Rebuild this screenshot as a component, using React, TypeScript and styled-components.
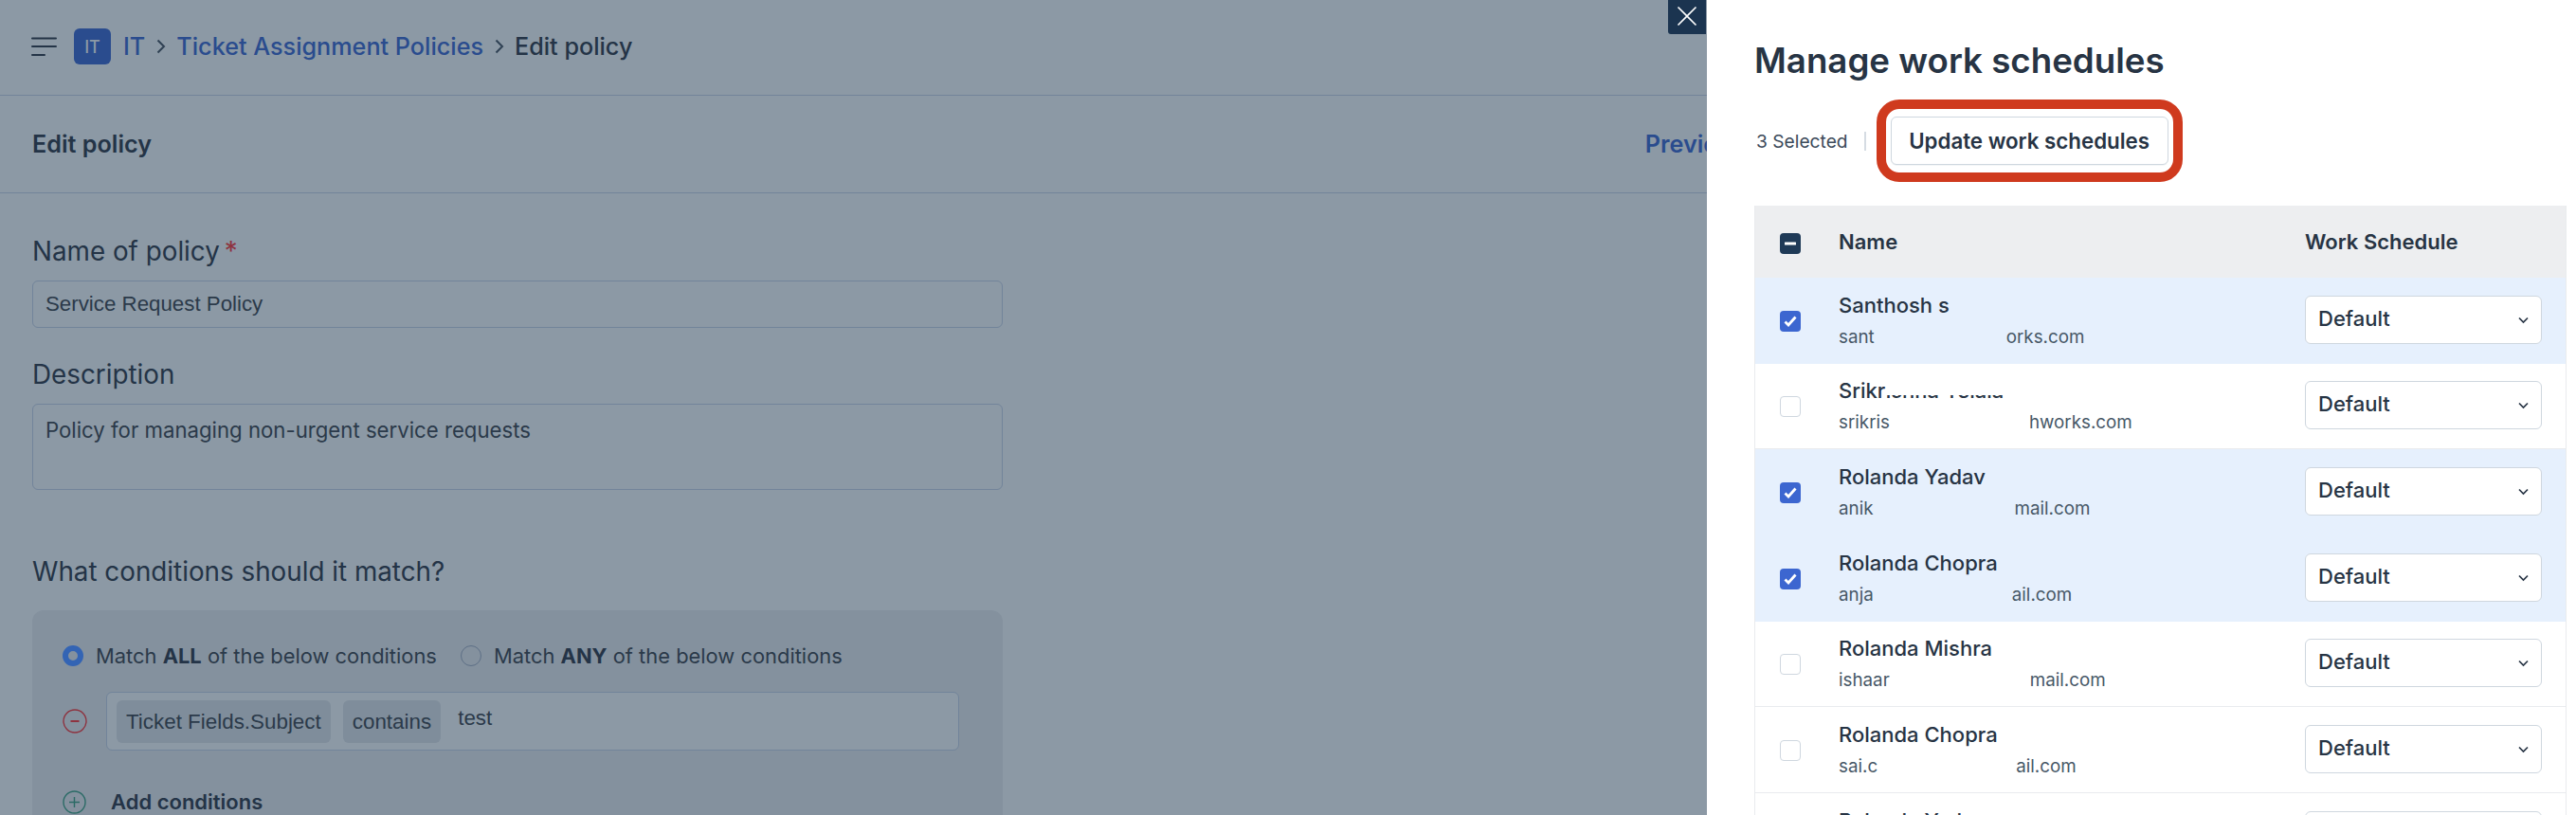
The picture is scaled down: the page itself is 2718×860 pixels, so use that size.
import React from "react";
import styled, { createGlobalStyle } from "styled-components";

const Global = createGlobalStyle`
  html, body { margin: 0; padding: 0; background: #8c99a5; }
  * { box-sizing: border-box; }
`;

const INTER = `Inter, "Liberation Sans", sans-serif`;
const ARIAL = `"Liberation Sans", Arial, sans-serif`;

const Screen = styled.div`
  position: relative;
  width: 2718px;
  height: 860px;
  overflow: hidden;
  background: #8c99a5;
  font-family: ${INTER};
  color: #243447;
`;

const Page = styled.main`
  display: block;
  height: 860px;
`;

const TopBar = styled.header`
  display: flex;
  align-items: center;
  height: 101px;
  padding: 0 0 2px 33px;
  border-bottom: 1px solid #72849a;
  font-size: 25.200px;
  font-weight: 500;
`;

const Badge = styled.span`
  display: flex;
  align-items: center;
  justify-content: center;
  width: 39px;
  height: 38px;
  margin: 0 13px 0 18px;
  border-radius: 6px;
  background: #2a4c8e;
  color: #8c99a5;
  font-size: 18px;
  font-weight: 500;
`;

const Crumb = styled.span<{ $current?: boolean }>`
  color: ${(p) => (p.$current ? "#243447" : "#2a4c8e")};
`;

const CrumbSep = styled.span`
  display: flex;
  margin: 0 11.500px;
  color: #2f4154;
`;

const ActionBar = styled.div`
  display: flex;
  align-items: center;
  justify-content: space-between;
  height: 103px;
  padding: 0 885px 0 34px;
  border-bottom: 1px solid #72849a;
  font-size: 25.200px;
  font-weight: 600;
`;

const PreviewLink = styled.span`
  color: #2a4c8e;
`;

const Form = styled.div`
  display: flex;
  flex-direction: column;
  width: 1024px;
  margin-left: 34px;
  padding-top: 43px;
`;

const FieldLabel = styled.div`
  font-size: 27.800px;
  line-height: 36px;
  color: #243447;
`;

const Required = styled.span`
  margin-left: 5px;
  color: #8e3340;
`;

const TextBox = styled.div<{ $h: number }>`
  height: ${(p) => p.$h}px;
  margin: 13px 0 31px;
  padding: 0 13px;
  border: 1px solid #72849a;
  border-radius: 6px;
  font-family: ${ARIAL};
  font-size: 22.300px;
  line-height: 48px;
  color: #2b3a4a;
`;

const TextArea = styled(TextBox)`
  margin-bottom: 0;
  padding-top: 3px;
  font-family: ${INTER};
  font-size: 22.200px;
`;

const SectionTitle = styled(FieldLabel)`
  margin-top: 68px;
`;

const RuleCard = styled.section`
  margin-top: 23px;
  height: 260px;
  padding: 31px 32px 0;
  border-radius: 12px;
  background: #84919e;
`;

const MatchRow = styled.div`
  display: flex;
  align-items: center;
  height: 34px;
  font-size: 21.900px;
  color: #2b3a4a;
`;

const Radio = styled.span<{ $on?: boolean }>`
  flex: none;
  width: 22px;
  height: 22px;
  margin-right: 13px;
  border-radius: 50%;
  border: ${(p) => (p.$on ? "6px solid #3364b4" : "1px solid #5d6f86")};
`;

const MatchOption = styled.span`
  display: flex;
  align-items: center;
  margin-right: 25px;
`;

const MatchText = styled.span`
  b {
    font-weight: 700;
    color: #243447;
  }
`;

const ConditionRow = styled.div`
  display: flex;
  align-items: center;
  margin-top: 21px;
  padding-right: 14px;
`;

const IconSlot = styled.span`
  display: flex;
  flex: none;
  width: 46px;
`;

const ConditionBox = styled.div`
  display: flex;
  flex: 1;
  gap: 13px;
  height: 62px;
  padding: 8px 10px;
  border: 1px solid #72849a;
  border-radius: 6px;
  background: #8c99a5;
  font-family: ${ARIAL};
  font-size: 22.400px;
  color: #2b3a4a;
`;

const Chip = styled.span`
  padding: 0 10px;
  line-height: 45px;
  height: 45px;
  border-radius: 6px;
  background: #7f8d9b;
`;

const ConditionValue = styled.span`
  margin-left: 5px;
  line-height: 37px;
`;

const AddRow = styled.div`
  display: flex;
  align-items: center;
  margin-top: 41px;
  font-size: 22px;
  font-weight: 600;
  color: #243447;
`;

const AddSlot = styled(IconSlot)`
  width: 51px;
`;

/* Drawer */
const Drawer = styled.aside`
  position: absolute;
  top: 0;
  left: 1801px;
  width: 917px;
  height: 860px;
  padding: 42px 10px 0 50px;
  background: #fff;
`;

const CloseButton = styled.button`
  position: absolute;
  top: 0;
  left: -41px;
  display: flex;
  align-items: center;
  justify-content: center;
  width: 40px;
  height: 36px;
  padding: 0 0 3px;
  border: 0;
  border-radius: 0 0 0 3px;
  background: #1b3450;
  color: #fff;
`;

const Title = styled.h1`
  margin: 0;
  font-size: 36.700px;
  line-height: 44px;
  font-weight: 600;
  color: #273444;
`;

const Toolbar = styled.div`
  display: flex;
  align-items: center;
  height: 51px;
  margin-top: 37px;
  padding-left: 2px;
`;

const SelectedCount = styled.span`
  font-size: 19.200px;
  color: #3c4a5a;
`;

const Divider = styled.span`
  width: 2px;
  height: 20px;
  margin: 0 26px 0 17px;
  background: #d6dce3;
`;

const ButtonWrap = styled.div`
  position: relative;
`;

const UpdateButton = styled.button`
  display: block;
  width: 293px;
  height: 51px;
  padding: 0;
  border: 1px solid #cfd7df;
  border-radius: 6px;
  background: #fff;
  font-family: ${INTER};
  font-size: 22.300px;
  font-weight: 600;
  color: #273444;
  box-shadow: 0 1px 0 rgba(24, 50, 71, 0.05);
`;

const Highlight = styled.span`
  position: absolute;
  top: -18px;
  left: -15px;
  right: -15px;
  bottom: -18px;
  border: 10px solid #cf3a1e;
  border-radius: 24px;
  pointer-events: none;
`;

const Table = styled.div`
  margin-top: 43px;
  border-left: 1px solid #e9ebee;
  border-right: 1px solid #e9ebee;
`;

const HeadRow = styled.div`
  display: grid;
  grid-template-columns: 88px 492px 1fr;
  align-items: center;
  height: 76px;
  background: #edeef0;
  font-size: 22px;
  font-weight: 600;
  color: #273444;
`;

const Row = styled.div<{ $selected?: boolean }>`
  display: grid;
  grid-template-columns: 88px 492px 1fr;
  align-items: center;
  height: 90.670px;
  background: ${(p) => (p.$selected ? "#e6f0fd" : "#fff")};
  border-bottom: 1px solid ${(p) => (p.$selected ? "#e6f0fd" : "#e9ebee")};
`;

const CheckCell = styled.div<{ $top: number }>`
  display: flex;
  padding: ${(p) => p.$top}px 0 0 26px;
`;

const Check = styled.span<{ $tone: "dark" | "blue" | "off" }>`
  display: flex;
  align-items: center;
  justify-content: center;
  width: 22px;
  height: 22px;
  border-radius: 4px;
  color: #fff;
  border: 1px solid ${(p) => (p.$tone === "off" ? "#cfd7df" : "transparent")};
  background: ${(p) =>
    p.$tone === "dark" ? "#1f3a57" : p.$tone === "blue" ? "#3c66d0" : "#fff"};
`;

const PersonCell = styled.div`
  display: flex;
  flex-direction: column;
`;

const PersonName = styled.div`
  position: relative;
  align-self: flex-start;
  font-size: 22px;
  line-height: 30px;
  font-weight: 500;
  color: #273444;
`;

const NameMask = styled.span`
  position: absolute;
  left: 50px;
  right: 0;
  top: 0;
  height: 20px;
  background: #fff;
`;

const Email = styled.div`
  display: flex;
  margin-top: 6px;
  font-size: 18.800px;
  line-height: 26px;
  color: #475867;
`;

const EmailGap = styled.span<{ $w: number }>`
  width: ${(p) => p.$w}px;
`;

const ScheduleSelect = styled.div`
  display: flex;
  align-items: center;
  justify-content: space-between;
  width: 250px;
  height: 51px;
  margin-top: -1px;
  padding: 0 13px 3px 13px;
  border: 1px solid #cfd7df;
  border-radius: 6px;
  background: #fff;
  font-size: 22px;
  font-weight: 500;
  color: #273444;
`;

const ChevronIcon = styled.svg`
  margin-top: 4px;
`;

const Chevron = () => (
  <ChevronIcon width="11" height="8" viewBox="0 0 11 8" fill="none">
    <path d="M1 1.500l4.500 4.500L10 1.500" stroke="#273444" strokeWidth="1.700" />
  </ChevronIcon>
);

const people = [
  { name: "Santhosh s", left: "sant", right: "orks.com", gap: 139, sel: true },
  { name: "Srikrishna Yelala", left: "srikris", right: "hworks.com", gap: 147, sel: false, mask: true },
  { name: "Rolanda Yadav", left: "anik", right: "mail.com", gap: 149, sel: true },
  { name: "Rolanda Chopra", left: "anja", right: "ail.com", gap: 146, sel: true },
  { name: "Rolanda Mishra", left: "ishaar", right: "mail.com", gap: 148, sel: false },
  { name: "Rolanda Chopra", left: "sai.c", right: "ail.com", gap: 146, sel: false },
  { name: "Rolanda Yadav", left: "anik", right: "mail.com", gap: 149, sel: false },
];

const Separator = () => (
  <CrumbSep>
    <svg width="10" height="16" viewBox="0 0 10 16" fill="none">
      <path d="M1.500 1.500L8 8l-6.500 6.500" stroke="currentColor" strokeWidth="2" />
    </svg>
  </CrumbSep>
);

export default function App() {
  return (
    <Screen>
      <Global />
      <Page>
        <TopBar>
          <svg width="27" height="20" viewBox="0 0 27 20" fill="none">
            <path d="M1 1.500h25M1 10h25M1 19h13" stroke="#243447" strokeWidth="2" strokeLinecap="round" />
          </svg>
          <Badge>IT</Badge>
          <Crumb>IT</Crumb>
          <Separator />
          <Crumb>Ticket Assignment Policies</Crumb>
          <Separator />
          <Crumb $current>Edit policy</Crumb>
        </TopBar>
        <ActionBar>
          <span>Edit policy</span>
          <PreviewLink>Preview</PreviewLink>
        </ActionBar>
        <Form>
          <FieldLabel>
            Name of policy<Required>*</Required>
          </FieldLabel>
          <TextBox $h={50}>Service Request Policy</TextBox>
          <FieldLabel>Description</FieldLabel>
          <TextArea $h={91}>Policy for managing non-urgent service requests</TextArea>
          <SectionTitle>What conditions should it match?</SectionTitle>
          <RuleCard>
            <MatchRow>
              <MatchOption>
                <Radio $on />
                <MatchText>
                  Match <b>ALL</b> of the below conditions
                </MatchText>
              </MatchOption>
              <MatchOption>
                <Radio />
                <MatchText>
                  Match <b>ANY</b> of the below conditions
                </MatchText>
              </MatchOption>
            </MatchRow>
            <ConditionRow>
              <IconSlot>
                <svg width="26" height="26" viewBox="0 0 26 26" fill="none">
                  <circle cx="13" cy="13" r="12" stroke="#8e3340" strokeWidth="1.400" />
                  <path d="M8.500 13h9" stroke="#8e3340" strokeWidth="2" />
                </svg>
              </IconSlot>
              <ConditionBox>
                <Chip>Ticket Fields.Subject</Chip>
                <Chip>contains</Chip>
                <ConditionValue>test</ConditionValue>
              </ConditionBox>
            </ConditionRow>
            <AddRow>
              <AddSlot>
                <svg width="25" height="25" viewBox="0 0 25 25" fill="none">
                  <circle cx="12.500" cy="12.500" r="11.500" stroke="#2b6b66" strokeWidth="1.400" />
                  <path d="M12.500 7v11M7 12.500h11" stroke="#2b6b66" strokeWidth="1.400" />
                </svg>
              </AddSlot>
              Add conditions
            </AddRow>
          </RuleCard>
        </Form>
      </Page>
      <Drawer>
        <CloseButton aria-label="Close">
          <svg width="22" height="22" viewBox="0 0 22 22" fill="none">
            <path d="M1.500 1.500l19 19M20.500 1.500l-19 19" stroke="#fff" strokeWidth="1.600" />
          </svg>
        </CloseButton>
        <Title>Manage work schedules</Title>
        <Toolbar>
          <SelectedCount>3 Selected</SelectedCount>
          <Divider />
          <ButtonWrap>
            <UpdateButton>Update work schedules</UpdateButton>
            <Highlight />
          </ButtonWrap>
        </Toolbar>
        <Table>
          <HeadRow>
            <CheckCell $top={4}>
              <Check $tone="dark">
                <svg width="12" height="4" viewBox="0 0 12 4">
                  <rect width="12" height="3" y="0.500" rx="0.500" fill="#fff" />
                </svg>
              </Check>
            </CheckCell>
            <span>Name</span>
            <span>Work Schedule</span>
          </HeadRow>
          {people.map((p, i) => (
            <Row key={i} $selected={p.sel}>
              <CheckCell $top={2}>
                <Check $tone={p.sel ? "blue" : "off"}>
                  {p.sel && (
                    <svg width="14" height="12" viewBox="0 0 14 12" fill="none">
                      <path d="M1.500 6.500L5 10l7.500-8.500" stroke="#fff" strokeWidth="2.800" />
                    </svg>
                  )}
                </Check>
              </CheckCell>
              <PersonCell>
                <PersonName>
                  {p.name}
                  {p.mask && <NameMask />}
                </PersonName>
                <Email>
                  <span>{p.left}</span>
                  <EmailGap $w={p.gap} />
                  <span>{p.right}</span>
                </Email>
              </PersonCell>
              <ScheduleSelect>
                Default
                <Chevron />
              </ScheduleSelect>
            </Row>
          ))}
        </Table>
      </Drawer>
    </Screen>
  );
}
